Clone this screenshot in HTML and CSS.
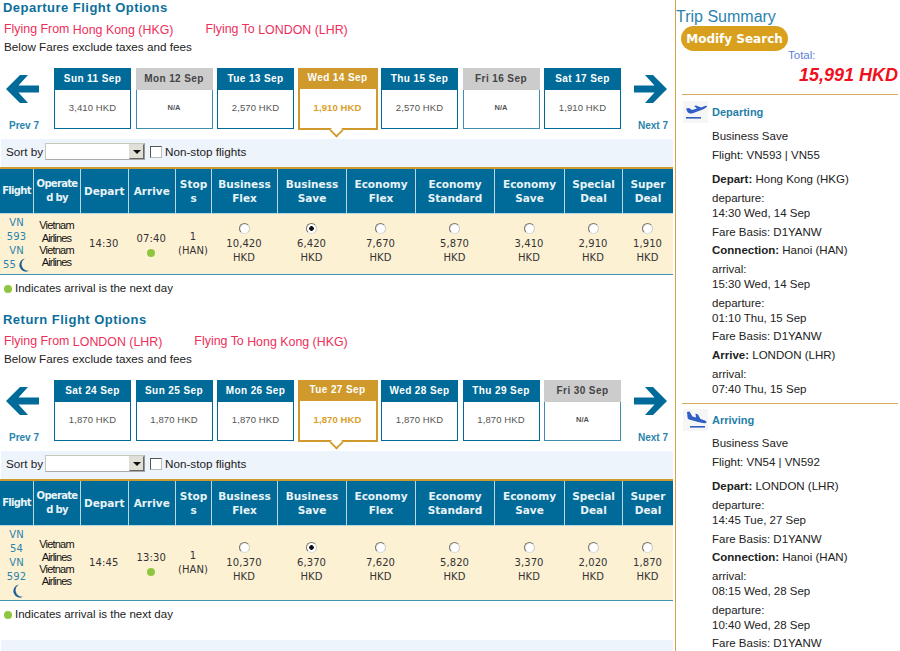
FILE: index.html
```html
<!DOCTYPE html>
<html lang="en">
<head>
<meta charset="utf-8">
<title>Flight Options</title>
<link rel="stylesheet" href="styles.css">
</head>
<body>
<svg class="defs" width="0" height="0" aria-hidden="true">
  <defs>
    <symbol id="arrow" viewBox="0 0 33 28"><path d="M14 0 L0 14 L14 28 L22 28 L12.5 17.5 L33 17.5 L33 10.5 L12.5 10.5 L22 0 Z"/></symbol>
    <symbol id="moon" viewBox="0 0 14 14"><path d="M9 0.5 A6.6 6.6 0 1 0 13.5 12.6 A6.8 6.8 0 0 1 5.6 7 A7 7 0 0 1 9 0.5 Z"/></symbol>
  </defs>
</svg>
<div class="page">
  <main class="main">
    <section class="leg">
      <h2 class="leg-title">Departure Flight Options</h2>
      <div class="route"><span>Flying From <span class="place">Hong Kong (HKG)</span></span><span>Flying To <span class="place">LONDON (LHR)</span></span></div>
      <p class="note">Below Fares exclude taxes and fees</p>
      <div class="dates">
        <div class="nav"><svg class="nav-arrow"><use href="#arrow"/></svg><span class="nav-label">Prev 7</span></div>
        <div class="cards">
          <div class="card"><div class="card-head">Sun 11 Sep</div><div class="card-body">3,410 HKD</div></div>
          <div class="card off"><div class="card-head">Mon 12 Sep</div><div class="card-body">N/A</div></div>
          <div class="card"><div class="card-head">Tue 13 Sep</div><div class="card-body">2,570 HKD</div></div>
          <div class="card sel"><div class="card-head">Wed 14 Sep</div><div class="card-body">1,910 HKD</div></div>
          <div class="card"><div class="card-head">Thu 15 Sep</div><div class="card-body">2,570 HKD</div></div>
          <div class="card off"><div class="card-head">Fri 16 Sep</div><div class="card-body">N/A</div></div>
          <div class="card"><div class="card-head">Sat 17 Sep</div><div class="card-body">1,910 HKD</div></div>
        </div>
        <div class="nav next"><svg class="nav-arrow flip"><use href="#arrow"/></svg><span class="nav-label">Next 7</span></div>
      </div>
      <div class="sort"><span>Sort by</span><span class="select"><span class="select-btn"></span></span><span class="check"></span><span>Non-stop flights</span></div>
      <table class="fares">
        <colgroup><col class="c1"><col class="c2"><col class="c3"><col class="c3"><col class="c5"><col class="c6"><col class="c7"><col class="c8"><col class="c9"><col class="c10"><col class="c11"><col class="c12"></colgroup>
        <thead><tr><th class="tight">Flight</th><th class="tight">Operate<br>d by</th><th>Depart</th><th>Arrive</th><th>Stop<br>s</th><th>Business<br>Flex</th><th>Business<br>Save</th><th>Economy<br>Flex</th><th>Economy<br>Standard</th><th>Economy<br>Save</th><th>Special<br>Deal</th><th>Super<br>Deal</th></tr></thead>
        <tbody><tr>
          <td class="flight">VN<br>593<br>VN<br>55<svg class="moon"><use href="#moon"/></svg></td>
          <td class="airline">Vietnam<br>Airlines<br>Vietnam<br>Airlines</td>
          <td>14:30</td>
          <td>07:40<span class="dot"></span></td>
          <td>1<br>(HAN)</td>
          <td><input class="radio" type="radio" name="d"><br>10,420<br>HKD</td>
          <td><input class="radio" type="radio" name="d" checked><br>6,420<br>HKD</td>
          <td><input class="radio" type="radio" name="d"><br>7,670<br>HKD</td>
          <td><input class="radio" type="radio" name="d"><br>5,870<br>HKD</td>
          <td><input class="radio" type="radio" name="d"><br>3,410<br>HKD</td>
          <td><input class="radio" type="radio" name="d"><br>2,910<br>HKD</td>
          <td><input class="radio" type="radio" name="d"><br>1,910<br>HKD</td>
        </tr></tbody>
      </table>
      <p class="legend"><span class="dot inline"></span>Indicates arrival is the next day</p>
    </section>

    <section class="leg second">
      <h2 class="leg-title">Return Flight Options</h2>
      <div class="route"><span>Flying From <span class="place">LONDON (LHR)</span></span><span>Flying To <span class="place">Hong Kong (HKG)</span></span></div>
      <p class="note">Below Fares exclude taxes and fees</p>
      <div class="dates">
        <div class="nav"><svg class="nav-arrow"><use href="#arrow"/></svg><span class="nav-label">Prev 7</span></div>
        <div class="cards">
          <div class="card"><div class="card-head">Sat 24 Sep</div><div class="card-body">1,870 HKD</div></div>
          <div class="card"><div class="card-head">Sun 25 Sep</div><div class="card-body">1,870 HKD</div></div>
          <div class="card"><div class="card-head">Mon 26 Sep</div><div class="card-body">1,870 HKD</div></div>
          <div class="card sel"><div class="card-head">Tue 27 Sep</div><div class="card-body">1,870 HKD</div></div>
          <div class="card"><div class="card-head">Wed 28 Sep</div><div class="card-body">1,870 HKD</div></div>
          <div class="card"><div class="card-head">Thu 29 Sep</div><div class="card-body">1,870 HKD</div></div>
          <div class="card off"><div class="card-head">Fri 30 Sep</div><div class="card-body">N/A</div></div>
        </div>
        <div class="nav next"><svg class="nav-arrow flip"><use href="#arrow"/></svg><span class="nav-label">Next 7</span></div>
      </div>
      <div class="sort"><span>Sort by</span><span class="select"><span class="select-btn"></span></span><span class="check"></span><span>Non-stop flights</span></div>
      <table class="fares">
        <colgroup><col class="c1"><col class="c2"><col class="c3"><col class="c3"><col class="c5"><col class="c6"><col class="c7"><col class="c8"><col class="c9"><col class="c10"><col class="c11"><col class="c12"></colgroup>
        <thead><tr><th class="tight">Flight</th><th class="tight">Operate<br>d by</th><th>Depart</th><th>Arrive</th><th>Stop<br>s</th><th>Business<br>Flex</th><th>Business<br>Save</th><th>Economy<br>Flex</th><th>Economy<br>Standard</th><th>Economy<br>Save</th><th>Special<br>Deal</th><th>Super<br>Deal</th></tr></thead>
        <tbody><tr>
          <td class="flight">VN<br>54<br>VN<br>592<br><svg class="moon"><use href="#moon"/></svg></td>
          <td class="airline">Vietnam<br>Airlines<br>Vietnam<br>Airlines</td>
          <td>14:45</td>
          <td>13:30<span class="dot"></span></td>
          <td>1<br>(HAN)</td>
          <td><input class="radio" type="radio" name="r"><br>10,370<br>HKD</td>
          <td><input class="radio" type="radio" name="r" checked><br>6,370<br>HKD</td>
          <td><input class="radio" type="radio" name="r"><br>7,620<br>HKD</td>
          <td><input class="radio" type="radio" name="r"><br>5,820<br>HKD</td>
          <td><input class="radio" type="radio" name="r"><br>3,370<br>HKD</td>
          <td><input class="radio" type="radio" name="r"><br>2,020<br>HKD</td>
          <td><input class="radio" type="radio" name="r"><br>1,870<br>HKD</td>
        </tr></tbody>
      </table>
      <p class="legend"><span class="dot inline"></span>Indicates arrival is the next day</p>
      <div class="foot-bar"></div>
    </section>
  </main>

  <aside class="summary">
    <h2 class="summary-title">Trip Summary</h2>
    <button class="modify" type="button">Modify Search</button>
    <div class="total-label">Total:</div>
    <div class="total">15,991 HKD</div>
    <div class="trip">
      <div class="trip-head">
        <span class="plane"><svg viewBox="0 0 25 22" width="25" height="22"><path fill="#2f5fc4" d="M3 7.5 L6 7 L9 9 L14 7.5 L11 5 L13 4.6 L18 6.6 L22 5 Q24.500 4.500 24 5.800 Q22 8 17 9.500 L9 12.500 Q6 13 4.500 11 Z"/><rect x="3" y="16" width="15" height="1.600" fill="#2f5fc4"/></svg></span>
        <span>Departing</span>
      </div>
      <div class="trip-lines">
        <p>Business Save</p>
        <p class="gap">Flight: VN593 | VN55</p>
        <p><b>Depart:</b> Hong Kong (HKG)</p>
        <p>departure:<br>14:30 Wed, 14 Sep</p>
        <p>Fare Basis: D1YANW</p>
        <p><b>Connection:</b> Hanoi (HAN)</p>
        <p>arrival:<br>15:30 Wed, 14 Sep</p>
        <p>departure:<br>01:10 Thu, 15 Sep</p>
        <p>Fare Basis: D1YANW</p>
        <p><b>Arrive:</b> LONDON (LHR)</p>
        <p>arrival:<br>07:40 Thu, 15 Sep</p>
      </div>
    </div>
    <div class="trip">
      <div class="trip-head">
        <span class="plane"><svg viewBox="0 0 25 22" width="25" height="22"><path fill="#2f5fc4" d="M4 3 L6.500 2.500 L9.500 7.500 L13 8.500 L12.500 4.500 L15 5.500 L17.500 10 L22 11.500 Q24.500 13 23 14 Q20 14.500 15 13 L6 10.500 Q4 9.500 4.500 7.500 Z"/><rect x="7" y="17" width="15" height="1.600" fill="#2f5fc4"/></svg></span>
        <span>Arriving</span>
      </div>
      <div class="trip-lines">
        <p>Business Save</p>
        <p class="gap">Flight: VN54 | VN592</p>
        <p><b>Depart:</b> LONDON (LHR)</p>
        <p>departure:<br>14:45 Tue, 27 Sep</p>
        <p>Fare Basis: D1YANW</p>
        <p><b>Connection:</b> Hanoi (HAN)</p>
        <p>arrival:<br>08:15 Wed, 28 Sep</p>
        <p>departure:<br>10:40 Wed, 28 Sep</p>
        <p>Fare Basis: D1YANW</p>
      </div>
    </div>
  </aside>
</div>
</body>
</html>
```
FILE: styles.css
```css
* { box-sizing: border-box; }
html, body { margin: 0; padding: 0; height: 651px; overflow: hidden; background: #fff; }
body { font-family: "Liberation Sans", Arial, sans-serif; font-size: 12px; color: #222; }
.defs { position: absolute; }
.page { display: flex; align-items: stretch; width: 900px; height: 651px; overflow: hidden; }
.main { width: 675px; flex: none; padding-right: 1px; }
.summary { width: 225px; flex: none; border-left: 1px solid #d2a24c; padding-left: 5px; padding-right: 2px; }

.leg-title { margin: 0; padding-left: 3px; height: 15px; font-size: 13px; line-height: 15px; font-weight: bold; color: #0b6f9c; letter-spacing: 0.48px; }
.route { display: flex; gap: 32px; padding: 6px 0 0 4px; height: 24px; line-height: 17px; font-size: 12.4px; color: #ee2f5b; }
.place { position: relative; top: 1px; }
.note { margin: 0; padding-left: 4px; height: 15px; line-height: 15px; font-size: 11.7px; color: #222; }

.dates { display: flex; height: 71px; margin-top: 14px; }
.nav { width: 54px; flex: none; padding: 7px 0 0 6px; display: flex; flex-direction: column; }
.nav.next { width: 52px; padding-left: 12px; align-items: flex-start; }
.nav-arrow { width: 33px; height: 28px; fill: #006b99; display: block; }
.nav-arrow.flip { transform: scaleX(-1); }
.nav-label { margin-top: 17px; padding-left: 3px; font-size: 10px; line-height: 12px; font-weight: bold; color: #2a84ad; white-space: nowrap; }
.nav.next .nav-label { margin-left: 4px; padding-left: 0; }
.cards { display: flex; gap: 4.5px; width: 568px; flex: none; align-items: flex-start; }
.card { position: relative; width: 77px; height: 60.5px; flex: none; border: 1px solid #006b99; background: #fff; text-align: center; }
.card-head { height: 22px; background: #006b99; color: #fff; font-size: 10px; line-height: 21px; font-weight: bold; letter-spacing: 0.4px; margin: -1px -1px 0; }
.card-body { height: 37px; line-height: 36px; font-size: 9.5px; letter-spacing: 0.1px; color: #555; }
.card.off { border-color: #3f8db0; }
.card.off .card-head { background: #ccc; color: #444; }
.card.off .card-body { font-size: 7.5px; font-weight: bold; }
.card.sel { width: 80px; height: 62px; border: 2px solid #cf9a2b; margin: 0 -1px; }
.card.sel .card-head { background: #cf9a2b; margin: -2px -2px 0; height: 21px; line-height: 19px; }
.card.sel .card-body { color: #dba02a; font-weight: bold; line-height: 38px; }
.card.sel::after { content: ""; position: absolute; left: 31px; top: 55px; width: 9px; height: 9px; background: #fff; border-right: 2px solid #cf9a2b; border-bottom: 2px solid #cf9a2b; transform: rotate(45deg) scale(0.9); }

.sort { display: flex; align-items: center; height: 28px; margin-left: 1px; width: 672px; padding: 0 0 3px 5px; background: #eef4fc; font-size: 11.7px; color: #222; }
.select { width: 100px; height: 17px; margin-left: 2px; background: #fff; border: 1px solid #c9c7ba; border-right-color: #999; border-bottom-color: #aaa; display: flex; justify-content: flex-end; }
.select-btn { position: relative; width: 15px; background: #e2dfd4; border: 1px solid #666; border-left-color: #ddd; border-top-color: #ddd; }
.select-btn::after { content: ""; position: absolute; left: 3px; top: 5px; border: 4px solid transparent; border-top: 4px solid #111; border-bottom: 0; }
.check { width: 12px; height: 12px; margin: 0 3px 0 5px; background: #fff; border: 1px solid #555; border-right-color: #bbb; border-bottom-color: #bbb; }

.fares { width: 673px; table-layout: fixed; border-collapse: separate; border-spacing: 0; border-top: 2px solid #cf9a2b; border-bottom: 1px solid #3f93b3; }
.c1 { width: 33px; } .c2 { width: 47px; } .c3 { width: 47.500px; } .c5 { width: 36px; } .c6 { width: 66px; } .c7 { width: 69px; } .c8 { width: 69px; } .c9 { width: 79px; } .c10 { width: 70px; } .c11 { width: 58px; } .c12 { width: 51px; }
.fares th { height: 45px; padding: 0; background: #006b99; color: #eaf3f7; border-left: 1px solid #bcd6e2; border-bottom: 1px solid #bcd6e2; font: bold 10.5px/14px "DejaVu Sans", sans-serif; text-align: center; overflow: hidden; white-space: nowrap; }
.fares th:first-child { border-left: 0; }
.fares th.tight { font-size: 10px; letter-spacing: -0.7px; }
.fares td { padding: 2px 0; background: #fdf1d3; text-align: center; vertical-align: middle; font: 10px/14px "DejaVu Sans", sans-serif; letter-spacing: 0.1px; color: #333; }
.fares td.flight { color: #2a84ad; }
.fares td.airline { font: 11px/12.300px "Liberation Sans", sans-serif; letter-spacing: -0.8px; color: #111; }
.moon { width: 14px; height: 14px; fill: #1f5f95; vertical-align: top; display: inline-block; }
.dot { display: block; width: 8px; height: 8px; margin: 3px auto 0; border-radius: 50%; background: #8fc640; }
.dot.inline { display: inline-block; margin: 0 3px 0 4px; vertical-align: -1px; }
.radio { appearance: none; -webkit-appearance: none; width: 11px; height: 11px; margin: 0 0 1px; vertical-align: top; border-radius: 50%; background: radial-gradient(circle at 55% 55%, #fff 55%, #e6e6e6 70%); border: 1px solid #77776f; border-right-color: #ccc; border-bottom-color: #ddd; }
.radio:checked { background: radial-gradient(circle, #111 0 2px, #fff 2.600px); }
.legend { margin: 0; height: 31px; padding-top: 6px; line-height: 14px; font-size: 11.5px; color: #222; }
.second { margin-top: 6px; }
.second .legend { height: 39px; }
.foot-bar { height: 11px; margin-left: 1px; width: 672px; background: #eef4fc; }

.summary-title { margin: 0 0 0 -5px; height: 24px; padding-top: 7px; font-size: 16px; line-height: 19px; font-weight: normal; color: #2a84ad; }
.modify { display: block; width: 107px; height: 25px; margin: 2px 0 0 0; padding: 1px 0 0; border: 0; border-radius: 13px; background: #d9a01d; color: #fff; font: bold 12px/24px "DejaVu Sans", sans-serif; }
.total-label { margin-left: 107px; height: 14px; font-size: 11.500px; line-height: 9px; color: #5f7fd8; }
.total { height: 29px; padding-top: 1px; text-align: right; font: italic bold 18px/19px "Liberation Sans", sans-serif; color: #f01020; white-space: nowrap; }
.trip { border-top: 1px solid #d9a85a; margin-left: 1px; padding-top: 5px; }
.trip + .trip { margin-top: 6px; }
.trip-head { display: flex; align-items: center; height: 23px; color: #1f7fa8; font-size: 11px; font-weight: bold; }
.plane { width: 25px; height: 22px; margin: 0 3px 0 1px; background: #f6f6f6; display: block; }
.trip-head > span:last-child { padding-left: 1px; }
.trip-lines { padding-left: 30px; margin-top: 6px; display: flex; flex-direction: column; gap: 3.400px; }
.trip + .trip .trip-lines { margin-top: 4px; }
.trip-lines p { margin: 0; font-size: 11.500px; line-height: 15.200px; color: #222; white-space: nowrap; }
.trip-lines p.gap { margin-bottom: 6px; }
```
